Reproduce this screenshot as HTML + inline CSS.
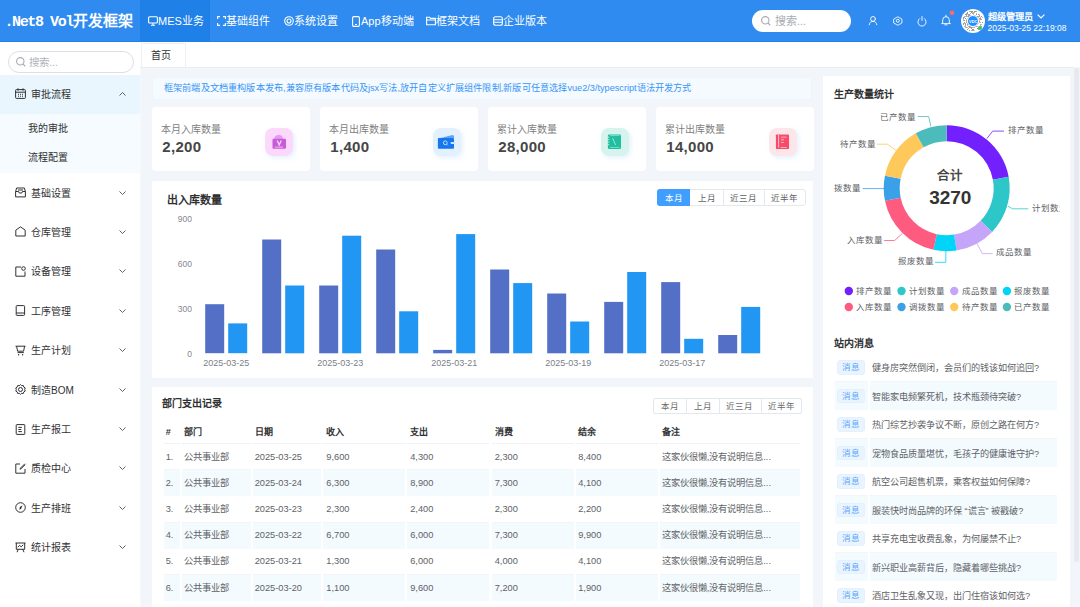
<!DOCTYPE html>
<html lang="zh-CN"><head><meta charset="utf-8">
<style>
*{box-sizing:border-box;margin:0;padding:0}
html,body{width:1080px;height:607px;overflow:hidden;background:#fff;font-family:"Liberation Sans",sans-serif;color:#303133;position:relative}
.a{position:absolute;white-space:nowrap}
svg{position:absolute;overflow:visible}
</style></head><body>
<div class="a" style="left:0.00px;top:0.00px;width:1080px;height:42px;background:#2f8bef"></div>
<div class="a" style="left:0.00px;top:41.00px;width:1080px;height:1px;background:#1b78e0;opacity:.6"></div>
<div class="a" style="left:4.50px;top:11.00px;font-size:15px;line-height:20px;font-weight:bold;color:#fff"><span style="font-family:'Liberation Mono',monospace;letter-spacing:-1.4px">.Net8 Vol</span>开发框架</div>
<div class="a" style="left:140.00px;top:0.00px;width:70px;height:42px;background:#1f80e8"></div>
<svg style="left:148px;top:16px" width="10" height="10" viewBox="0 0 10 10" fill="none" stroke="#fff" stroke-width="1.1"><rect x="0.6" y="0.8" width="8.8" height="6.2" rx="1"/><path d="M3 9.3h4M5 7v2.3"/></svg>
<div class="a" style="left:158.00px;top:14.00px;font-size:11px;line-height:14px;color:#fff">MES业务</div>
<svg style="left:217px;top:16px" width="9" height="10" viewBox="0 0 9 10" fill="none" stroke="#fff" stroke-width="1.1"><path d="M3 0.6H0.6v2.4M0.6 7v2.4H3M6 0.6h2.4v2.4M8.4 7v2.4H6"/></svg>
<div class="a" style="left:226.00px;top:14.00px;font-size:11px;line-height:14px;color:#fff">基础组件</div>
<svg style="left:284px;top:16px" width="10" height="10" viewBox="0 0 10 10" fill="none" stroke="#fff" stroke-width="1.1"><circle cx="5" cy="5" r="4.3"/><circle cx="5" cy="5" r="2"/></svg>
<div class="a" style="left:294.00px;top:14.00px;font-size:11px;line-height:14px;color:#fff">系统设置</div>
<svg style="left:352px;top:15.5px" width="8" height="11" viewBox="0 0 8 11" fill="none" stroke="#fff" stroke-width="1.1"><rect x="0.6" y="0.6" width="6.8" height="9.8" rx="1.2"/><path d="M3 8.5h2"/></svg>
<div class="a" style="left:361.00px;top:14.00px;font-size:11px;line-height:14px;color:#fff">App移动端</div>
<svg style="left:426px;top:16px" width="10" height="10" viewBox="0 0 10 10" fill="none" stroke="#fff" stroke-width="1.1"><path d="M0.6 1.2h3l1 1.2h4.8v6.4H0.6z M0.6 4h8.8"/></svg>
<div class="a" style="left:436.00px;top:14.00px;font-size:11px;line-height:14px;color:#fff">框架文档</div>
<svg style="left:493px;top:16px" width="10" height="10" viewBox="0 0 10 10" fill="none" stroke="#fff" stroke-width="1.1"><rect x="0.6" y="0.8" width="8.8" height="8.4" rx="2"/><path d="M0.6 3.7h8.8M0.6 6.3h8.8"/></svg>
<div class="a" style="left:503.00px;top:14.00px;font-size:11px;line-height:14px;color:#fff">企业版本</div>
<div class="a" style="left:752.00px;top:10.00px;width:99px;height:22px;border-radius:11px;background:#fff"></div>
<svg style="left:761px;top:16px" width="10" height="10" viewBox="0 0 10 10" fill="none" stroke="#a8abb2" stroke-width="1.1"><circle cx="4.3" cy="4.3" r="3.7"/><path d="M7 7l2.3 2.3"/></svg>
<div class="a" style="left:775.00px;top:13.00px;font-size:11px;line-height:16px;color:#a8abb2">搜索...</div>
<svg style="left:868px;top:15px" width="10" height="11" viewBox="0 0 10 11" fill="none" stroke="#fff" stroke-width="0.9" stroke-linecap="round"><circle cx="5" cy="3.9" r="2.4"/><path d="M1.2 9.7c0.3-2.2 1.8-3.3 3.8-3.3s3.5 1.1 3.8 3.3"/></svg>
<svg style="left:892.5px;top:16.3px" width="9.6" height="9.6" viewBox="0 0 11 10.5" fill="none" stroke="#fff" stroke-width="1.05"><path d="M5.5 0.8c1 0 1.6 .8 2.3 1.2s1.8 .3 2.3 1.2 0 1.7 0 2.3 .5 1.5 0 2.3-1.5 .8-2.3 1.2-1.3 1.2-2.3 1.2-1.6-.8-2.3-1.2-1.8-.3-2.3-1.2 0-1.7 0-2.3-.5-1.5 0-2.3 1.5-.8 2.3-1.2 1.3-1.2 2.3-1.2z"/><circle cx="5.5" cy="5.2" r="1.7"/></svg>
<svg style="left:916.5px;top:16px" width="10" height="11" viewBox="0 0 10 11" fill="none" stroke="#fff" stroke-width="0.9" stroke-linecap="round"><path d="M2.6 2.6A4.1 4.1 0 1 0 7.4 2.6"/><path d="M5 0.5v4"/></svg>
<svg style="left:940.5px;top:15px" width="10" height="11" viewBox="0 0 10 11" fill="none" stroke="#fff" stroke-width="0.9" stroke-linecap="round"><path d="M0.6 8.6h8.8M1.7 8.6V5a3.3 3.3 0 0 1 6.6 0v3.6M5 0.2v1.4M3.8 9.8h2.4"/></svg>
<svg style="left:949px;top:9.5px" width="6" height="6" viewBox="0 0 6 6"><circle cx="3" cy="2.8" r="2.4" fill="#f56c6c"/></svg>
<div class="a" style="left:961.00px;top:9.00px;width:24px;height:24px;border-radius:50%;background:#fff"></div>
<svg style="left:962px;top:10px" width="22" height="22" viewBox="0 0 22 22" opacity="0.75"><rect x="7" y="1" width="1" height="1" fill="#999"/><rect x="8" y="1" width="1" height="1" fill="#777"/><rect x="9" y="1" width="1" height="1" fill="#777"/><rect x="10" y="1" width="1" height="1" fill="#777"/><rect x="12" y="1" width="1" height="1" fill="#777"/><rect x="13" y="1" width="1" height="1" fill="#777"/><rect x="14" y="1" width="1" height="1" fill="#888"/><rect x="5" y="2" width="1" height="1" fill="#777"/><rect x="9" y="2" width="1" height="1" fill="#888"/><rect x="10" y="2" width="1" height="1" fill="#999"/><rect x="11" y="2" width="1" height="1" fill="#999"/><rect x="12" y="2" width="1" height="1" fill="#999"/><rect x="4" y="3" width="1" height="1" fill="#999"/><rect x="5" y="3" width="1" height="1" fill="#777"/><rect x="8" y="3" width="1" height="1" fill="#888"/><rect x="10" y="3" width="1" height="1" fill="#888"/><rect x="11" y="3" width="1" height="1" fill="#999"/><rect x="14" y="3" width="1" height="1" fill="#aaa"/><rect x="3" y="4" width="1" height="1" fill="#777"/><rect x="4" y="4" width="1" height="1" fill="#888"/><rect x="5" y="4" width="1" height="1" fill="#aaa"/><rect x="6" y="4" width="1" height="1" fill="#888"/><rect x="7" y="4" width="1" height="1" fill="#777"/><rect x="11" y="4" width="1" height="1" fill="#aaa"/><rect x="14" y="4" width="1" height="1" fill="#777"/><rect x="16" y="4" width="1" height="1" fill="#777"/><rect x="17" y="4" width="1" height="1" fill="#aaa"/><rect x="4" y="5" width="1" height="1" fill="#888"/><rect x="6" y="5" width="1" height="1" fill="#888"/><rect x="7" y="5" width="1" height="1" fill="#777"/><rect x="8" y="5" width="1" height="1" fill="#999"/><rect x="10" y="5" width="1" height="1" fill="#999"/><rect x="11" y="5" width="1" height="1" fill="#888"/><rect x="12" y="5" width="1" height="1" fill="#888"/><rect x="13" y="5" width="1" height="1" fill="#aaa"/><rect x="17" y="5" width="1" height="1" fill="#888"/><rect x="2" y="6" width="1" height="1" fill="#999"/><rect x="3" y="6" width="1" height="1" fill="#999"/><rect x="4" y="6" width="1" height="1" fill="#999"/><rect x="5" y="6" width="1" height="1" fill="#999"/><rect x="6" y="6" width="1" height="1" fill="#777"/><rect x="7" y="6" width="1" height="1" fill="#aaa"/><rect x="9" y="6" width="1" height="1" fill="#999"/><rect x="14" y="6" width="1" height="1" fill="#888"/><rect x="15" y="6" width="1" height="1" fill="#888"/><rect x="16" y="6" width="1" height="1" fill="#888"/><rect x="17" y="6" width="1" height="1" fill="#777"/><rect x="19" y="6" width="1" height="1" fill="#777"/><rect x="1" y="7" width="1" height="1" fill="#777"/><rect x="2" y="7" width="1" height="1" fill="#999"/><rect x="6" y="7" width="1" height="1" fill="#999"/><rect x="8" y="7" width="1" height="1" fill="#aaa"/><rect x="11" y="7" width="1" height="1" fill="#777"/><rect x="14" y="7" width="1" height="1" fill="#888"/><rect x="15" y="7" width="1" height="1" fill="#999"/><rect x="16" y="7" width="1" height="1" fill="#aaa"/><rect x="18" y="7" width="1" height="1" fill="#999"/><rect x="20" y="7" width="1" height="1" fill="#aaa"/><rect x="1" y="8" width="1" height="1" fill="#777"/><rect x="3" y="8" width="1" height="1" fill="#777"/><rect x="5" y="8" width="1" height="1" fill="#aaa"/><rect x="7" y="8" width="1" height="1" fill="#999"/><rect x="10" y="8" width="1" height="1" fill="#999"/><rect x="14" y="8" width="1" height="1" fill="#999"/><rect x="17" y="8" width="1" height="1" fill="#888"/><rect x="18" y="8" width="1" height="1" fill="#777"/><rect x="1" y="9" width="1" height="1" fill="#999"/><rect x="4" y="9" width="1" height="1" fill="#aaa"/><rect x="6" y="9" width="1" height="1" fill="#999"/><rect x="7" y="9" width="1" height="1" fill="#888"/><rect x="8" y="9" width="1" height="1" fill="#999"/><rect x="9" y="9" width="1" height="1" fill="#777"/><rect x="10" y="9" width="1" height="1" fill="#aaa"/><rect x="12" y="9" width="1" height="1" fill="#777"/><rect x="16" y="9" width="1" height="1" fill="#999"/><rect x="17" y="9" width="1" height="1" fill="#aaa"/><rect x="18" y="9" width="1" height="1" fill="#888"/><rect x="19" y="9" width="1" height="1" fill="#777"/><rect x="1" y="10" width="1" height="1" fill="#999"/><rect x="2" y="10" width="1" height="1" fill="#888"/><rect x="4" y="10" width="1" height="1" fill="#888"/><rect x="6" y="10" width="1" height="1" fill="#999"/><rect x="7" y="10" width="1" height="1" fill="#777"/><rect x="10" y="10" width="1" height="1" fill="#999"/><rect x="12" y="10" width="1" height="1" fill="#aaa"/><rect x="13" y="10" width="1" height="1" fill="#999"/><rect x="15" y="10" width="1" height="1" fill="#888"/><rect x="17" y="10" width="1" height="1" fill="#aaa"/><rect x="4" y="11" width="1" height="1" fill="#999"/><rect x="6" y="11" width="1" height="1" fill="#888"/><rect x="10" y="11" width="1" height="1" fill="#999"/><rect x="11" y="11" width="1" height="1" fill="#777"/><rect x="13" y="11" width="1" height="1" fill="#888"/><rect x="15" y="11" width="1" height="1" fill="#777"/><rect x="16" y="11" width="1" height="1" fill="#aaa"/><rect x="17" y="11" width="1" height="1" fill="#777"/><rect x="2" y="12" width="1" height="1" fill="#999"/><rect x="4" y="12" width="1" height="1" fill="#888"/><rect x="6" y="12" width="1" height="1" fill="#aaa"/><rect x="9" y="12" width="1" height="1" fill="#888"/><rect x="10" y="12" width="1" height="1" fill="#777"/><rect x="11" y="12" width="1" height="1" fill="#aaa"/><rect x="12" y="12" width="1" height="1" fill="#999"/><rect x="13" y="12" width="1" height="1" fill="#999"/><rect x="17" y="12" width="1" height="1" fill="#aaa"/><rect x="18" y="12" width="1" height="1" fill="#999"/><rect x="20" y="12" width="1" height="1" fill="#777"/><rect x="1" y="13" width="1" height="1" fill="#888"/><rect x="2" y="13" width="1" height="1" fill="#999"/><rect x="3" y="13" width="1" height="1" fill="#888"/><rect x="5" y="13" width="1" height="1" fill="#888"/><rect x="6" y="13" width="1" height="1" fill="#aaa"/><rect x="7" y="13" width="1" height="1" fill="#aaa"/><rect x="8" y="13" width="1" height="1" fill="#888"/><rect x="9" y="13" width="1" height="1" fill="#777"/><rect x="10" y="13" width="1" height="1" fill="#aaa"/><rect x="12" y="13" width="1" height="1" fill="#999"/><rect x="14" y="13" width="1" height="1" fill="#aaa"/><rect x="15" y="13" width="1" height="1" fill="#999"/><rect x="16" y="13" width="1" height="1" fill="#999"/><rect x="1" y="14" width="1" height="1" fill="#888"/><rect x="3" y="14" width="1" height="1" fill="#777"/><rect x="5" y="14" width="1" height="1" fill="#777"/><rect x="6" y="14" width="1" height="1" fill="#777"/><rect x="9" y="14" width="1" height="1" fill="#999"/><rect x="10" y="14" width="1" height="1" fill="#777"/><rect x="11" y="14" width="1" height="1" fill="#aaa"/><rect x="13" y="14" width="1" height="1" fill="#aaa"/><rect x="15" y="14" width="1" height="1" fill="#999"/><rect x="18" y="14" width="1" height="1" fill="#999"/><rect x="19" y="14" width="1" height="1" fill="#aaa"/><rect x="3" y="15" width="1" height="1" fill="#888"/><rect x="5" y="15" width="1" height="1" fill="#aaa"/><rect x="8" y="15" width="1" height="1" fill="#777"/><rect x="11" y="15" width="1" height="1" fill="#888"/><rect x="12" y="15" width="1" height="1" fill="#888"/><rect x="13" y="15" width="1" height="1" fill="#888"/><rect x="18" y="15" width="1" height="1" fill="#999"/><rect x="2" y="16" width="1" height="1" fill="#999"/><rect x="3" y="16" width="1" height="1" fill="#aaa"/><rect x="6" y="16" width="1" height="1" fill="#aaa"/><rect x="7" y="16" width="1" height="1" fill="#777"/><rect x="8" y="16" width="1" height="1" fill="#888"/><rect x="11" y="16" width="1" height="1" fill="#999"/><rect x="13" y="16" width="1" height="1" fill="#999"/><rect x="14" y="16" width="1" height="1" fill="#888"/><rect x="15" y="16" width="1" height="1" fill="#aaa"/><rect x="19" y="16" width="1" height="1" fill="#aaa"/><rect x="3" y="17" width="1" height="1" fill="#999"/><rect x="4" y="17" width="1" height="1" fill="#888"/><rect x="5" y="17" width="1" height="1" fill="#aaa"/><rect x="7" y="17" width="1" height="1" fill="#777"/><rect x="8" y="17" width="1" height="1" fill="#777"/><rect x="9" y="17" width="1" height="1" fill="#777"/><rect x="10" y="17" width="1" height="1" fill="#aaa"/><rect x="11" y="17" width="1" height="1" fill="#999"/><rect x="12" y="17" width="1" height="1" fill="#999"/><rect x="16" y="17" width="1" height="1" fill="#aaa"/><rect x="18" y="17" width="1" height="1" fill="#aaa"/><rect x="6" y="18" width="1" height="1" fill="#888"/><rect x="9" y="18" width="1" height="1" fill="#777"/><rect x="15" y="18" width="1" height="1" fill="#777"/><rect x="16" y="18" width="1" height="1" fill="#aaa"/><rect x="5" y="19" width="1" height="1" fill="#888"/><rect x="10" y="19" width="1" height="1" fill="#777"/><rect x="11" y="19" width="1" height="1" fill="#777"/><rect x="16" y="19" width="1" height="1" fill="#888"/><rect x="7" y="20" width="1" height="1" fill="#777"/><rect x="9" y="20" width="1" height="1" fill="#999"/><rect x="10" y="20" width="1" height="1" fill="#888"/><rect x="11" y="20" width="1" height="1" fill="#888"/><rect x="12" y="20" width="1" height="1" fill="#aaa"/></svg>
<div class="a" style="left:967.00px;top:15.00px;width:12px;height:12px;border-radius:50%;background:#1e90ff;border:1px solid #fff"></div>
<div class="a" style="left:969.00px;top:18.50px;font-size:4px;line-height:5px;font-weight:bold;color:#fff">VDC</div>
<div class="a" style="left:978.00px;top:25.50px;width:4px;height:4px;border-radius:50%;background:#3bc45a"></div>
<div class="a" style="left:987.50px;top:11.20px;font-size:9.2px;line-height:13px;font-weight:bold;color:#fff">超级管理员</div>
<svg style="left:1037px;top:13.5px" width="8" height="5" viewBox="0 0 8 5" fill="none" stroke="#fff" stroke-width="1.2"><path d="M0.6 0.6L4 4l3.4-3.4"/></svg>
<div class="a" style="left:987.50px;top:22.50px;font-size:8.5px;line-height:11px;color:#fff">2025-03-25 22:19:08</div>
<div class="a" style="left:7.50px;top:50.50px;width:126px;height:22px;border:1px solid #dcdfe6;border-radius:11px"></div>
<svg style="left:16px;top:57px" width="10" height="10" viewBox="0 0 10 10" fill="none" stroke="#a8abb2" stroke-width="1.1"><circle cx="4.3" cy="4.3" r="3.7"/><path d="M7 7l2.3 2.3"/></svg>
<div class="a" style="left:29.20px;top:54.50px;font-size:10.5px;line-height:15px;color:#b0b3b9">搜索...</div>
<div class="a" style="left:0.00px;top:75.00px;width:140px;height:39px;background:#eaf6fd"></div>
<div class="a" style="left:0.00px;top:114.00px;width:140px;height:59.3px;background:#f5fbfe"></div>
<svg style="left:15px;top:88.2px" width="11" height="11" viewBox="0 0 11 11" fill="none" stroke="#303133" stroke-width="1"><rect x="0.6" y="1.6" width="9.8" height="8.8" rx="0.8"/><path d="M0.6 4.2h9.8M3 0.3v2.4M8 0.3v2.4M3 6.3h1M5 6.3h1M7 6.3h1M3 8.2h1M5 8.2h1M7 8.2h1"/></svg>
<div class="a" style="left:31.00px;top:86.70px;font-size:10px;line-height:15px;color:#303133">审批流程</div>
<svg style="left:119px;top:91.7px" width="7" height="4" viewBox="0 0 7 4" fill="none" stroke="#606266" stroke-width="1"><path d="M0.5 3.5L3.5 0.5l3 3"/></svg>
<svg style="left:15px;top:187.0px" width="11" height="11" viewBox="0 0 11 11" fill="none" stroke="#303133" stroke-width="1"><path d="M1.6 1h7.8l1 3.5v5.4H0.6V4.5z M0.6 4.5h3l0.6 1.5h2.6l0.6-1.5h3 M3 3h5"/></svg>
<div class="a" style="left:31.00px;top:185.50px;font-size:10px;line-height:15px;color:#303133">基础设置</div>
<svg style="left:119px;top:190.5px" width="7" height="4" viewBox="0 0 7 4" fill="none" stroke="#606266" stroke-width="1"><path d="M0.5 0.5L3.5 3.5l3-3"/></svg>
<svg style="left:15px;top:226.4px" width="11" height="11" viewBox="0 0 11 11" fill="none" stroke="#303133" stroke-width="1"><path d="M0.8 10V4.2L5.5 0.8l4.7 3.4V10z"/></svg>
<div class="a" style="left:31.00px;top:224.91px;font-size:10px;line-height:15px;color:#303133">仓库管理</div>
<svg style="left:119px;top:229.9px" width="7" height="4" viewBox="0 0 7 4" fill="none" stroke="#606266" stroke-width="1"><path d="M0.5 0.5L3.5 3.5l3-3"/></svg>
<svg style="left:15px;top:265.8px" width="11" height="11" viewBox="0 0 11 11" fill="none" stroke="#303133" stroke-width="1"><path d="M6 1H0.8v9.2h9.2V5.5"/><circle cx="8.5" cy="2.5" r="1.8"/></svg>
<div class="a" style="left:31.00px;top:264.32px;font-size:10px;line-height:15px;color:#303133">设备管理</div>
<svg style="left:119px;top:269.3px" width="7" height="4" viewBox="0 0 7 4" fill="none" stroke="#606266" stroke-width="1"><path d="M0.5 0.5L3.5 3.5l3-3"/></svg>
<svg style="left:15px;top:305.2px" width="11" height="11" viewBox="0 0 11 11" fill="none" stroke="#303133" stroke-width="1"><rect x="1.2" y="0.6" width="8.4" height="9.8" rx="0.8"/><path d="M1.2 8h8.4"/></svg>
<div class="a" style="left:31.00px;top:303.73px;font-size:10px;line-height:15px;color:#303133">工序管理</div>
<svg style="left:119px;top:308.7px" width="7" height="4" viewBox="0 0 7 4" fill="none" stroke="#606266" stroke-width="1"><path d="M0.5 0.5L3.5 3.5l3-3"/></svg>
<svg style="left:15px;top:344.6px" width="11" height="11" viewBox="0 0 11 11" fill="none" stroke="#303133" stroke-width="1"><path d="M0.5 1.2h10M1.6 1.2l1 5h6l1-5M2.6 7.6h6.2"/><circle cx="3.6" cy="9.8" r=".7" fill="#303133" stroke="none"/><circle cx="7.6" cy="9.8" r=".7" fill="#303133" stroke="none"/></svg>
<div class="a" style="left:31.00px;top:343.14px;font-size:10px;line-height:15px;color:#303133">生产计划</div>
<svg style="left:119px;top:348.1px" width="7" height="4" viewBox="0 0 7 4" fill="none" stroke="#606266" stroke-width="1"><path d="M0.5 0.5L3.5 3.5l3-3"/></svg>
<svg style="left:15px;top:384.0px" width="11" height="11" viewBox="0 0 11 11" fill="none" stroke="#303133" stroke-width="1"><circle cx="5.5" cy="5.5" r="2"/><path d="M5.5 0.6l1.2 1.1 1.6-.2.5 1.6 1.4.8-.5 1.6.5 1.6-1.4.8-.5 1.6-1.6-.2-1.2 1.1-1.2-1.1-1.6.2-.5-1.6-1.4-.8.5-1.6-.5-1.6 1.4-.8.5-1.6 1.6.2z"/></svg>
<div class="a" style="left:31.00px;top:382.55px;font-size:10px;line-height:15px;color:#303133">制造BOM</div>
<svg style="left:119px;top:387.5px" width="7" height="4" viewBox="0 0 7 4" fill="none" stroke="#606266" stroke-width="1"><path d="M0.5 0.5L3.5 3.5l3-3"/></svg>
<svg style="left:15px;top:423.5px" width="11" height="11" viewBox="0 0 11 11" fill="none" stroke="#303133" stroke-width="1"><rect x="1.2" y="0.6" width="8.6" height="9.8" rx="0.6"/><path d="M3.3 3.4h3.6M3.3 5.5h3M3.3 7.6h3.6"/></svg>
<div class="a" style="left:31.00px;top:421.96px;font-size:10px;line-height:15px;color:#303133">生产报工</div>
<svg style="left:119px;top:427.0px" width="7" height="4" viewBox="0 0 7 4" fill="none" stroke="#606266" stroke-width="1"><path d="M0.5 0.5L3.5 3.5l3-3"/></svg>
<svg style="left:15px;top:462.9px" width="11" height="11" viewBox="0 0 11 11" fill="none" stroke="#303133" stroke-width="1"><path d="M5 1H0.8v9.2h9.2V6M9.8 0.8L5.5 5.1 5 6.2l1.1-0.5 4.2-4.2"/></svg>
<div class="a" style="left:31.00px;top:461.37px;font-size:10px;line-height:15px;color:#303133">质检中心</div>
<svg style="left:119px;top:466.4px" width="7" height="4" viewBox="0 0 7 4" fill="none" stroke="#606266" stroke-width="1"><path d="M0.5 0.5L3.5 3.5l3-3"/></svg>
<svg style="left:15px;top:502.3px" width="11" height="11" viewBox="0 0 11 11" fill="none" stroke="#303133" stroke-width="1"><circle cx="5.5" cy="5.5" r="4.8"/><path d="M7.6 3.2L6.2 6.4 4.4 8 4.8 5z" fill="#303133" stroke="none"/></svg>
<div class="a" style="left:31.00px;top:500.78px;font-size:10px;line-height:15px;color:#303133">生产排班</div>
<svg style="left:119px;top:505.8px" width="7" height="4" viewBox="0 0 7 4" fill="none" stroke="#606266" stroke-width="1"><path d="M0.5 0.5L3.5 3.5l3-3"/></svg>
<svg style="left:15px;top:541.7px" width="11" height="11" viewBox="0 0 11 11" fill="none" stroke="#303133" stroke-width="1"><path d="M0.5 1h10M1.3 1v6.3h8.4V1M3.3 7.3l-1.3 2.9M7.7 7.3l1.3 2.9M2.8 5.2l1.8-1.8 1.6 1.4 2-2"/></svg>
<div class="a" style="left:31.00px;top:540.19px;font-size:10px;line-height:15px;color:#303133">统计报表</div>
<svg style="left:119px;top:545.2px" width="7" height="4" viewBox="0 0 7 4" fill="none" stroke="#606266" stroke-width="1"><path d="M0.5 0.5L3.5 3.5l3-3"/></svg>
<div class="a" style="left:28.00px;top:120.50px;font-size:10px;line-height:15px;color:#303133">我的审批</div>
<div class="a" style="left:28.00px;top:150.30px;font-size:10px;line-height:15px;color:#303133">流程配置</div>
<div class="a" style="left:140.50px;top:43.00px;width:45.5px;height:25px;border:1px solid #eef0f3;border-bottom:none;background:#fff"></div>
<div class="a" style="left:151.00px;top:47.50px;font-size:10px;line-height:15px;color:#303133">首页</div>
<div class="a" style="left:140.00px;top:67.00px;width:940px;height:540px;background:#f2f5fa"></div>
<div class="a" style="left:140.00px;top:67.00px;width:1px;height:540px;background:#f7f9fc"></div>
<div class="a" style="left:140.00px;top:67.00px;width:934px;height:1px;background:#e9ecf1"></div>
<div class="a" style="left:1074.40px;top:67.50px;width:5px;height:494px;background:#e6e9ee;border-radius:2.5px"></div>
<div class="a" style="left:152.00px;top:76.50px;width:660px;height:23px;background:#f5faff;border:1px solid #edf5fe;border-radius:3px"></div>
<div class="a" style="left:163.50px;top:82.20px;font-size:9px;transform:scaleX(1.0175);transform-origin:0 0;line-height:13px;color:#3795f6">框架前端及文档重构版本发布,兼容原有版本代码及jsx写法,放开自定义扩展组件限制,新版可任意选择vue2/3/typescript语法开发方式</div>
<div class="a" style="left:152.00px;top:107.00px;width:157.5px;height:63.5px;background:#fff;border-radius:4px"></div>
<div class="a" style="left:161.30px;top:122.30px;font-size:10px;line-height:15px;color:#808080">本月入库数量</div>
<div class="a" style="left:162.30px;top:137.20px;font-size:15px;letter-spacing:0.3px;line-height:20px;font-weight:bold;color:#464646">2,200</div>
<div class="a" style="left:265.00px;top:128.00px;width:28px;height:28px;border-radius:8px;background:#fcd8fc;box-shadow:2px 2px 5px rgba(180,215,250,.35)"><svg style="left:0;top:0" width="28" height="28" viewBox="0 0 28 28"><path d="M9 10.9C9.5 8.5 11 7 13.3 7h1.5c1.8 0 2.8 1.5 3.2 3.9z" fill="#e49af4"/><rect x="7.5" y="10.8" width="13.5" height="9.9" rx="1" fill="#c95bd9"/><path d="M12.2 12.6l2 4.4 2-4.4" fill="none" stroke="#f6dcfb" stroke-width="1.3"/><path d="M9.8 19.1h8.2" stroke="#f0c6f8" stroke-width="0.9"/></svg></div>
<div class="a" style="left:320.00px;top:107.00px;width:157.5px;height:63.5px;background:#fff;border-radius:4px"></div>
<div class="a" style="left:329.30px;top:122.30px;font-size:10px;line-height:15px;color:#808080">本月出库数量</div>
<div class="a" style="left:330.30px;top:137.20px;font-size:15px;letter-spacing:0.3px;line-height:20px;font-weight:bold;color:#464646">1,400</div>
<div class="a" style="left:433.00px;top:128.00px;width:28px;height:28px;border-radius:8px;background:#e3f0fe;box-shadow:2px 2px 5px rgba(180,215,250,.35)"><svg style="left:0;top:0" width="28" height="28" viewBox="0 0 28 28"><path d="M6.5 10.3L19.5 6.9c1 0 1.5 .8 1.5 1.8v1.6z" fill="#5fa4f6"/><rect x="4.9" y="10.1" width="16.1" height="10.6" rx="1" fill="#1677ee"/><circle cx="12.3" cy="14.8" r="1.9" fill="none" stroke="#cfe3ff" stroke-width="0.9"/><path d="M13.6 16.2l1.2 1.2" stroke="#cfe3ff" stroke-width="0.9"/><rect x="17.5" y="13.9" width="4.5" height="2" rx=".8" fill="#cfe3ff"/></svg></div>
<div class="a" style="left:488.00px;top:107.00px;width:157.5px;height:63.5px;background:#fff;border-radius:4px"></div>
<div class="a" style="left:497.30px;top:122.30px;font-size:10px;line-height:15px;color:#808080">累计入库数量</div>
<div class="a" style="left:498.30px;top:137.20px;font-size:15px;letter-spacing:0.3px;line-height:20px;font-weight:bold;color:#464646">28,000</div>
<div class="a" style="left:601.00px;top:128.00px;width:28px;height:28px;border-radius:8px;background:#d6f3ee;box-shadow:2px 2px 5px rgba(180,215,250,.35)"><svg style="left:0;top:0" width="28" height="28" viewBox="0 0 28 28"><rect x="6.9" y="6.5" width="13.1" height="14.5" rx="1.3" fill="#1fbf9f"/><path d="M9 7.6h9.5M9 19.4h9.5" stroke="#a8e8d8" stroke-width="0.7"/><path d="M6.8 9.2h1.6M6.8 11.7h1.6M6.8 14.2h1.6M6.8 16.7h1.6" stroke="#d0f3ea" stroke-width="0.9"/><path d="M11.6 10.2l3 6.8" stroke="#b8efe0" stroke-width="0.8"/></svg></div>
<div class="a" style="left:656.00px;top:107.00px;width:157.5px;height:63.5px;background:#fff;border-radius:4px"></div>
<div class="a" style="left:665.30px;top:122.30px;font-size:10px;line-height:15px;color:#808080">累计出库数量</div>
<div class="a" style="left:666.30px;top:137.20px;font-size:15px;letter-spacing:0.3px;line-height:20px;font-weight:bold;color:#464646">14,000</div>
<div class="a" style="left:769.00px;top:128.00px;width:28px;height:28px;border-radius:8px;background:#fde6ea;box-shadow:2px 2px 5px rgba(180,215,250,.35)"><svg style="left:0;top:0" width="28" height="28" viewBox="0 0 28 28"><rect x="6.9" y="6.5" width="13.1" height="14.5" rx="0.8" fill="#f64c6a"/><path d="M9.6 7v12.5" stroke="#ffc8d2" stroke-width="0.9"/><path d="M12 9.2h5.5M12 11.8h3M12 14.4h3M11.6 19.5h6" stroke="#ffb8c6" stroke-width="0.9"/></svg></div>
<div class="a" style="left:152.00px;top:180.50px;width:661px;height:197.5px;background:#fff"></div>
<div class="a" style="left:166.50px;top:191.50px;font-size:11px;line-height:16px;font-weight:bold;color:#303133">出入库数量</div>
<div class="a" style="left:657.00px;top:189.40px;width:148.5px;height:17px;border:1px solid #e6e8ec;border-radius:3px;background:#fff"></div>
<div class="a" style="left:657.00px;top:189.40px;width:33px;height:17px;border-radius:3px 0 0 3px;background:#409eff"></div>
<div class="a" style="left:723.00px;top:189.70px;width:1px;height:16.5px;background:#e6e8ec"></div>
<div class="a" style="left:764.00px;top:189.70px;width:1px;height:16.5px;background:#e6e8ec"></div>
<div class="a" style="left:657.00px;top:189.70px;width:33px;height:16.5px;text-align:center;font-size:8.5px;line-height:16.5px;color:#fff">本月</div>
<div class="a" style="left:690.00px;top:189.70px;width:33px;height:16.5px;text-align:center;font-size:8.5px;line-height:16.5px;color:#606266">上月</div>
<div class="a" style="left:723.00px;top:189.70px;width:41px;height:16.5px;text-align:center;font-size:8.5px;line-height:16.5px;color:#606266">近三月</div>
<div class="a" style="left:764.00px;top:189.70px;width:41px;height:16.5px;text-align:center;font-size:8.5px;line-height:16.5px;color:#606266">近半年</div>
<div class="a" style="left:120.00px;top:213.00px;width:72px;text-align:right;font-size:8.5px;line-height:12px;color:#858891">900</div>
<div class="a" style="left:120.00px;top:258.30px;width:72px;text-align:right;font-size:8.5px;line-height:12px;color:#858891">600</div>
<div class="a" style="left:120.00px;top:303.30px;width:72px;text-align:right;font-size:8.5px;line-height:12px;color:#858891">300</div>
<div class="a" style="left:120.00px;top:348.30px;width:72px;text-align:right;font-size:8.5px;line-height:12px;color:#858891">0</div>
<div class="a" style="left:186.20px;top:356.50px;width:80px;text-align:center;font-size:9px;line-height:12px;color:#7c7f88">2025-03-25</div>
<div class="a" style="left:300.20px;top:356.50px;width:80px;text-align:center;font-size:9px;line-height:12px;color:#7c7f88">2025-03-23</div>
<div class="a" style="left:414.20px;top:356.50px;width:80px;text-align:center;font-size:9px;line-height:12px;color:#7c7f88">2025-03-21</div>
<div class="a" style="left:528.20px;top:356.50px;width:80px;text-align:center;font-size:9px;line-height:12px;color:#7c7f88">2025-03-19</div>
<div class="a" style="left:642.20px;top:356.50px;width:80px;text-align:center;font-size:9px;line-height:12px;color:#7c7f88">2025-03-17</div>
<div class="a" style="left:152.00px;top:386.80px;width:661px;height:230px;background:#fff"></div>
<div class="a" style="left:162.00px;top:396.20px;font-size:10px;line-height:15px;font-weight:bold;color:#303133">部门支出记录</div>
<div class="a" style="left:653.00px;top:398.00px;width:149px;height:16px;border:1px solid #e4e7ed;border-radius:2px"></div>
<div class="a" style="left:686.40px;top:398.00px;width:1px;height:16px;background:#e4e7ed"></div>
<div class="a" style="left:719.30px;top:398.00px;width:1px;height:16px;background:#e4e7ed"></div>
<div class="a" style="left:760.50px;top:398.00px;width:1px;height:16px;background:#e4e7ed"></div>
<div class="a" style="left:653.00px;top:398.30px;width:33.4px;text-align:center;font-size:8.5px;line-height:16px;color:#6a6a6a">本月</div>
<div class="a" style="left:686.40px;top:398.30px;width:32.9px;text-align:center;font-size:8.5px;line-height:16px;color:#6a6a6a">上月</div>
<div class="a" style="left:719.30px;top:398.30px;width:41.2px;text-align:center;font-size:8.5px;line-height:16px;color:#6a6a6a">近三月</div>
<div class="a" style="left:760.50px;top:398.30px;width:41.5px;text-align:center;font-size:8.5px;line-height:16px;color:#6a6a6a">近半年</div>
<div class="a" style="left:165.70px;top:425.00px;font-size:9px;line-height:14px;font-weight:bold;color:#303133">#</div>
<div class="a" style="left:164.00px;top:443.00px;width:16.0px;height:1px;background:#f0f2f5"></div>
<div class="a" style="left:183.70px;top:425.00px;font-size:9px;line-height:14px;font-weight:bold;color:#303133">部门</div>
<div class="a" style="left:182.00px;top:443.00px;width:69.0px;height:1px;background:#f0f2f5"></div>
<div class="a" style="left:254.70px;top:425.00px;font-size:9px;line-height:14px;font-weight:bold;color:#303133">日期</div>
<div class="a" style="left:253.00px;top:443.00px;width:68.3px;height:1px;background:#f0f2f5"></div>
<div class="a" style="left:326.30px;top:425.00px;font-size:9px;line-height:14px;font-weight:bold;color:#303133">收入</div>
<div class="a" style="left:323.30px;top:443.00px;width:82.1px;height:1px;background:#f0f2f5"></div>
<div class="a" style="left:410.20px;top:425.00px;font-size:9px;line-height:14px;font-weight:bold;color:#303133">支出</div>
<div class="a" style="left:407.40px;top:443.00px;width:82.1px;height:1px;background:#f0f2f5"></div>
<div class="a" style="left:494.70px;top:425.00px;font-size:9px;line-height:14px;font-weight:bold;color:#303133">消费</div>
<div class="a" style="left:491.50px;top:443.00px;width:82.1px;height:1px;background:#f0f2f5"></div>
<div class="a" style="left:578.20px;top:425.00px;font-size:9px;line-height:14px;font-weight:bold;color:#303133">结余</div>
<div class="a" style="left:575.60px;top:443.00px;width:82.1px;height:1px;background:#f0f2f5"></div>
<div class="a" style="left:661.70px;top:425.00px;font-size:9px;line-height:14px;font-weight:bold;color:#303133">备注</div>
<div class="a" style="left:659.70px;top:443.00px;width:140.3px;height:1px;background:#f0f2f5"></div>
<div class="a" style="left:164.00px;top:469.40px;width:16.0px;height:1px;background:#f3f5f8"></div>
<div class="a" style="left:182.00px;top:469.40px;width:69.0px;height:1px;background:#f3f5f8"></div>
<div class="a" style="left:253.00px;top:469.40px;width:68.3px;height:1px;background:#f3f5f8"></div>
<div class="a" style="left:323.30px;top:469.40px;width:82.1px;height:1px;background:#f3f5f8"></div>
<div class="a" style="left:407.40px;top:469.40px;width:82.1px;height:1px;background:#f3f5f8"></div>
<div class="a" style="left:491.50px;top:469.40px;width:82.1px;height:1px;background:#f3f5f8"></div>
<div class="a" style="left:575.60px;top:469.40px;width:82.1px;height:1px;background:#f3f5f8"></div>
<div class="a" style="left:659.70px;top:469.40px;width:140.3px;height:1px;background:#f3f5f8"></div>
<div class="a" style="left:165.70px;top:450.05px;font-size:9.25px;line-height:14px;color:#606266">1.</div>
<div class="a" style="left:183.70px;top:450.05px;font-size:9.25px;line-height:14px;color:#606266">公共事业部</div>
<div class="a" style="left:254.70px;top:450.05px;font-size:9.25px;line-height:14px;color:#606266">2025-03-25</div>
<div class="a" style="left:326.30px;top:450.05px;font-size:9.25px;line-height:14px;color:#606266">9,600</div>
<div class="a" style="left:410.20px;top:450.05px;font-size:9.25px;line-height:14px;color:#606266">4,300</div>
<div class="a" style="left:494.70px;top:450.05px;font-size:9.25px;line-height:14px;color:#606266">2,300</div>
<div class="a" style="left:578.20px;top:450.05px;font-size:9.25px;line-height:14px;color:#606266">8,400</div>
<div class="a" style="left:661.70px;top:450.05px;font-size:9.25px;line-height:14px;color:#606266">这家伙很懒,没有说明信息...</div>
<div class="a" style="left:164.00px;top:470.40px;width:16.0px;height:26.1px;background:#f4fbff"></div>
<div class="a" style="left:182.00px;top:470.40px;width:69.0px;height:26.1px;background:#f4fbff"></div>
<div class="a" style="left:253.00px;top:470.40px;width:68.3px;height:26.1px;background:#f4fbff"></div>
<div class="a" style="left:323.30px;top:470.40px;width:82.1px;height:26.1px;background:#f4fbff"></div>
<div class="a" style="left:407.40px;top:470.40px;width:82.1px;height:26.1px;background:#f4fbff"></div>
<div class="a" style="left:491.50px;top:470.40px;width:82.1px;height:26.1px;background:#f4fbff"></div>
<div class="a" style="left:575.60px;top:470.40px;width:82.1px;height:26.1px;background:#f4fbff"></div>
<div class="a" style="left:659.70px;top:470.40px;width:140.3px;height:26.1px;background:#f4fbff"></div>
<div class="a" style="left:165.70px;top:476.15px;font-size:9.25px;line-height:14px;color:#606266">2.</div>
<div class="a" style="left:183.70px;top:476.15px;font-size:9.25px;line-height:14px;color:#606266">公共事业部</div>
<div class="a" style="left:254.70px;top:476.15px;font-size:9.25px;line-height:14px;color:#606266">2025-03-24</div>
<div class="a" style="left:326.30px;top:476.15px;font-size:9.25px;line-height:14px;color:#606266">6,300</div>
<div class="a" style="left:410.20px;top:476.15px;font-size:9.25px;line-height:14px;color:#606266">8,900</div>
<div class="a" style="left:494.70px;top:476.15px;font-size:9.25px;line-height:14px;color:#606266">7,300</div>
<div class="a" style="left:578.20px;top:476.15px;font-size:9.25px;line-height:14px;color:#606266">4,100</div>
<div class="a" style="left:661.70px;top:476.15px;font-size:9.25px;line-height:14px;color:#606266">这家伙很懒,没有说明信息...</div>
<div class="a" style="left:164.00px;top:521.60px;width:16.0px;height:1px;background:#f3f5f8"></div>
<div class="a" style="left:182.00px;top:521.60px;width:69.0px;height:1px;background:#f3f5f8"></div>
<div class="a" style="left:253.00px;top:521.60px;width:68.3px;height:1px;background:#f3f5f8"></div>
<div class="a" style="left:323.30px;top:521.60px;width:82.1px;height:1px;background:#f3f5f8"></div>
<div class="a" style="left:407.40px;top:521.60px;width:82.1px;height:1px;background:#f3f5f8"></div>
<div class="a" style="left:491.50px;top:521.60px;width:82.1px;height:1px;background:#f3f5f8"></div>
<div class="a" style="left:575.60px;top:521.60px;width:82.1px;height:1px;background:#f3f5f8"></div>
<div class="a" style="left:659.70px;top:521.60px;width:140.3px;height:1px;background:#f3f5f8"></div>
<div class="a" style="left:165.70px;top:502.25px;font-size:9.25px;line-height:14px;color:#606266">3.</div>
<div class="a" style="left:183.70px;top:502.25px;font-size:9.25px;line-height:14px;color:#606266">公共事业部</div>
<div class="a" style="left:254.70px;top:502.25px;font-size:9.25px;line-height:14px;color:#606266">2025-03-23</div>
<div class="a" style="left:326.30px;top:502.25px;font-size:9.25px;line-height:14px;color:#606266">2,300</div>
<div class="a" style="left:410.20px;top:502.25px;font-size:9.25px;line-height:14px;color:#606266">2,400</div>
<div class="a" style="left:494.70px;top:502.25px;font-size:9.25px;line-height:14px;color:#606266">2,300</div>
<div class="a" style="left:578.20px;top:502.25px;font-size:9.25px;line-height:14px;color:#606266">2,200</div>
<div class="a" style="left:661.70px;top:502.25px;font-size:9.25px;line-height:14px;color:#606266">这家伙很懒,没有说明信息...</div>
<div class="a" style="left:164.00px;top:522.60px;width:16.0px;height:26.1px;background:#f4fbff"></div>
<div class="a" style="left:182.00px;top:522.60px;width:69.0px;height:26.1px;background:#f4fbff"></div>
<div class="a" style="left:253.00px;top:522.60px;width:68.3px;height:26.1px;background:#f4fbff"></div>
<div class="a" style="left:323.30px;top:522.60px;width:82.1px;height:26.1px;background:#f4fbff"></div>
<div class="a" style="left:407.40px;top:522.60px;width:82.1px;height:26.1px;background:#f4fbff"></div>
<div class="a" style="left:491.50px;top:522.60px;width:82.1px;height:26.1px;background:#f4fbff"></div>
<div class="a" style="left:575.60px;top:522.60px;width:82.1px;height:26.1px;background:#f4fbff"></div>
<div class="a" style="left:659.70px;top:522.60px;width:140.3px;height:26.1px;background:#f4fbff"></div>
<div class="a" style="left:165.70px;top:528.35px;font-size:9.25px;line-height:14px;color:#606266">4.</div>
<div class="a" style="left:183.70px;top:528.35px;font-size:9.25px;line-height:14px;color:#606266">公共事业部</div>
<div class="a" style="left:254.70px;top:528.35px;font-size:9.25px;line-height:14px;color:#606266">2025-03-22</div>
<div class="a" style="left:326.30px;top:528.35px;font-size:9.25px;line-height:14px;color:#606266">6,700</div>
<div class="a" style="left:410.20px;top:528.35px;font-size:9.25px;line-height:14px;color:#606266">6,000</div>
<div class="a" style="left:494.70px;top:528.35px;font-size:9.25px;line-height:14px;color:#606266">7,300</div>
<div class="a" style="left:578.20px;top:528.35px;font-size:9.25px;line-height:14px;color:#606266">9,900</div>
<div class="a" style="left:661.70px;top:528.35px;font-size:9.25px;line-height:14px;color:#606266">这家伙很懒,没有说明信息...</div>
<div class="a" style="left:164.00px;top:573.80px;width:16.0px;height:1px;background:#f3f5f8"></div>
<div class="a" style="left:182.00px;top:573.80px;width:69.0px;height:1px;background:#f3f5f8"></div>
<div class="a" style="left:253.00px;top:573.80px;width:68.3px;height:1px;background:#f3f5f8"></div>
<div class="a" style="left:323.30px;top:573.80px;width:82.1px;height:1px;background:#f3f5f8"></div>
<div class="a" style="left:407.40px;top:573.80px;width:82.1px;height:1px;background:#f3f5f8"></div>
<div class="a" style="left:491.50px;top:573.80px;width:82.1px;height:1px;background:#f3f5f8"></div>
<div class="a" style="left:575.60px;top:573.80px;width:82.1px;height:1px;background:#f3f5f8"></div>
<div class="a" style="left:659.70px;top:573.80px;width:140.3px;height:1px;background:#f3f5f8"></div>
<div class="a" style="left:165.70px;top:554.45px;font-size:9.25px;line-height:14px;color:#606266">5.</div>
<div class="a" style="left:183.70px;top:554.45px;font-size:9.25px;line-height:14px;color:#606266">公共事业部</div>
<div class="a" style="left:254.70px;top:554.45px;font-size:9.25px;line-height:14px;color:#606266">2025-03-21</div>
<div class="a" style="left:326.30px;top:554.45px;font-size:9.25px;line-height:14px;color:#606266">1,300</div>
<div class="a" style="left:410.20px;top:554.45px;font-size:9.25px;line-height:14px;color:#606266">6,000</div>
<div class="a" style="left:494.70px;top:554.45px;font-size:9.25px;line-height:14px;color:#606266">4,000</div>
<div class="a" style="left:578.20px;top:554.45px;font-size:9.25px;line-height:14px;color:#606266">4,100</div>
<div class="a" style="left:661.70px;top:554.45px;font-size:9.25px;line-height:14px;color:#606266">这家伙很懒,没有说明信息...</div>
<div class="a" style="left:164.00px;top:574.80px;width:16.0px;height:26.1px;background:#f4fbff"></div>
<div class="a" style="left:182.00px;top:574.80px;width:69.0px;height:26.1px;background:#f4fbff"></div>
<div class="a" style="left:253.00px;top:574.80px;width:68.3px;height:26.1px;background:#f4fbff"></div>
<div class="a" style="left:323.30px;top:574.80px;width:82.1px;height:26.1px;background:#f4fbff"></div>
<div class="a" style="left:407.40px;top:574.80px;width:82.1px;height:26.1px;background:#f4fbff"></div>
<div class="a" style="left:491.50px;top:574.80px;width:82.1px;height:26.1px;background:#f4fbff"></div>
<div class="a" style="left:575.60px;top:574.80px;width:82.1px;height:26.1px;background:#f4fbff"></div>
<div class="a" style="left:659.70px;top:574.80px;width:140.3px;height:26.1px;background:#f4fbff"></div>
<div class="a" style="left:165.70px;top:580.55px;font-size:9.25px;line-height:14px;color:#606266">6.</div>
<div class="a" style="left:183.70px;top:580.55px;font-size:9.25px;line-height:14px;color:#606266">公共事业部</div>
<div class="a" style="left:254.70px;top:580.55px;font-size:9.25px;line-height:14px;color:#606266">2025-03-20</div>
<div class="a" style="left:326.30px;top:580.55px;font-size:9.25px;line-height:14px;color:#606266">1,100</div>
<div class="a" style="left:410.20px;top:580.55px;font-size:9.25px;line-height:14px;color:#606266">9,600</div>
<div class="a" style="left:494.70px;top:580.55px;font-size:9.25px;line-height:14px;color:#606266">7,200</div>
<div class="a" style="left:578.20px;top:580.55px;font-size:9.25px;line-height:14px;color:#606266">1,900</div>
<div class="a" style="left:661.70px;top:580.55px;font-size:9.25px;line-height:14px;color:#606266">这家伙很懒,没有说明信息...</div>
<div class="a" style="left:823.00px;top:76.00px;width:246.5px;height:540px;background:#fff"></div>
<div class="a" style="left:834.00px;top:86.50px;font-size:10px;line-height:15px;font-weight:bold;color:#303133">生产数量统计</div>
<div class="a" style="left:834.00px;top:336.10px;font-size:10px;line-height:15px;font-weight:bold;color:#303133">站内消息</div>
<div class="a" style="left:856.30px;top:285.00px;font-size:8.5px;line-height:12px;color:#606266">排产数量</div>
<div class="a" style="left:909.00px;top:285.00px;font-size:8.5px;line-height:12px;color:#606266">计划数量</div>
<div class="a" style="left:961.70px;top:285.00px;font-size:8.5px;line-height:12px;color:#606266">成品数量</div>
<div class="a" style="left:1014.40px;top:285.00px;font-size:8.5px;line-height:12px;color:#606266">报废数量</div>
<div class="a" style="left:856.30px;top:301.00px;font-size:8.5px;line-height:12px;color:#606266">入库数量</div>
<div class="a" style="left:909.00px;top:301.00px;font-size:8.5px;line-height:12px;color:#606266">调拨数量</div>
<div class="a" style="left:961.70px;top:301.00px;font-size:8.5px;line-height:12px;color:#606266">待产数量</div>
<div class="a" style="left:1014.40px;top:301.00px;font-size:8.5px;line-height:12px;color:#606266">已产数量</div>
<svg style="left:0;top:0" width="1080" height="607" viewBox="0 0 1080 607"><rect x="205.2" y="304.2" width="19" height="49.0" fill="#5470c6"/><rect x="228.2" y="323.4" width="19" height="29.8" fill="#2196f3"/><rect x="262.2" y="239.5" width="19" height="113.8" fill="#5470c6"/><rect x="285.2" y="285.5" width="19" height="67.8" fill="#2196f3"/><rect x="319.2" y="285.5" width="19" height="67.8" fill="#5470c6"/><rect x="342.2" y="235.7" width="19" height="117.6" fill="#2196f3"/><rect x="376.2" y="249.5" width="19" height="103.8" fill="#5470c6"/><rect x="399.2" y="311.3" width="19" height="42.0" fill="#2196f3"/><rect x="433.2" y="349.9" width="19" height="3.4" fill="#5470c6"/><rect x="456.2" y="234.1" width="19" height="119.2" fill="#2196f3"/><rect x="490.2" y="269.5" width="19" height="83.8" fill="#5470c6"/><rect x="513.2" y="283.1" width="19" height="70.2" fill="#2196f3"/><rect x="547.2" y="293.5" width="19" height="59.8" fill="#5470c6"/><rect x="570.2" y="321.5" width="19" height="31.8" fill="#2196f3"/><rect x="604.2" y="301.9" width="19" height="51.4" fill="#5470c6"/><rect x="627.2" y="272.0" width="19" height="81.3" fill="#2196f3"/><rect x="661.2" y="282.1" width="19" height="71.2" fill="#5470c6"/><rect x="684.2" y="338.8" width="19" height="14.5" fill="#2196f3"/><rect x="718.2" y="335.0" width="19" height="18.3" fill="#5470c6"/><rect x="741.2" y="306.9" width="19" height="46.4" fill="#2196f3"/><path d="M946.70 125.20A63 63 0 0 1 1008.65 176.72L992.91 179.63A47 47 0 0 0 946.70 141.20Z" fill="#7320ff"/><path d="M1008.65 176.72A63 63 0 0 1 992.09 231.88L980.57 220.79A47 47 0 0 0 992.91 179.63Z" fill="#2ec7c9"/><path d="M992.09 231.88A63 63 0 0 1 956.56 250.42L954.05 234.62A47 47 0 0 0 980.57 220.79Z" fill="#c5a5fa"/><path d="M956.56 250.42A63 63 0 0 1 933.39 249.78L936.77 234.14A47 47 0 0 0 954.05 234.62Z" fill="#00d4f7"/><path d="M933.39 249.78A63 63 0 0 1 884.99 200.87L900.66 197.65A47 47 0 0 0 936.77 234.14Z" fill="#ff5b80"/><path d="M884.99 200.87A63 63 0 0 1 884.96 175.64L900.64 178.83A47 47 0 0 0 900.66 197.65Z" fill="#3aa0e8"/><path d="M884.96 175.64A63 63 0 0 1 915.77 133.31L923.63 147.25A47 47 0 0 0 900.64 178.83Z" fill="#ffc85a"/><path d="M915.77 133.31A63 63 0 0 1 946.70 125.20L946.70 141.20A47 47 0 0 0 923.63 147.25Z" fill="#4cbbbb"/><path d="M986.9 138.5L992.7 131.1H1004" fill="none" stroke="#7320ff" stroke-width="0.8"/><path d="M1008 206.2L1012.5 208.8H1028.3" fill="none" stroke="#2ec7c9" stroke-width="0.8"/><path d="M976.9 243.1L982.2 253.6H992.7" fill="none" stroke="#c5a5fa" stroke-width="0.8"/><path d="M945.8 250.7V262.3H935.2" fill="none" stroke="#00d4f7" stroke-width="0.8"/><path d="M902.3 233.5L894.6 240.5H884.1" fill="none" stroke="#ff5b80" stroke-width="0.8"/><path d="M884.4 188.6H862.6" fill="none" stroke="#3aa0e8" stroke-width="0.8"/><path d="M895.9 150.3L887.4 144.2H877" fill="none" stroke="#ffc85a" stroke-width="0.8"/><path d="M930.9 126.4L928.6 116.5H917.7" fill="none" stroke="#4cbbbb" stroke-width="0.8"/><circle cx="848.8" cy="291" r="4.2" fill="#7320ff"/><circle cx="901.5" cy="291" r="4.2" fill="#2ec7c9"/><circle cx="954.2" cy="291" r="4.2" fill="#c5a5fa"/><circle cx="1006.9" cy="291" r="4.2" fill="#00d4f7"/><circle cx="848.8" cy="307" r="4.2" fill="#ff5b80"/><circle cx="901.5" cy="307" r="4.2" fill="#3aa0e8"/><circle cx="954.2" cy="307" r="4.2" fill="#ffc85a"/><circle cx="1006.9" cy="307" r="4.2" fill="#4cbbbb"/></svg>
<div class="a" style="left:834px;top:100px;width:225.5px;height:180px;overflow:hidden"><div class="a" style="left:173.7px;top:24.3px;font-size:8.5px;line-height:12px;color:#606266">排产数量</div><div class="a" style="left:197.7px;top:102.0px;font-size:8.5px;line-height:12px;color:#606266">计划数量</div><div class="a" style="left:162.1px;top:146.3px;font-size:8.5px;line-height:12px;color:#606266">成品数量</div><div class="a" style="left:63.9px;top:155.2px;font-size:8.5px;line-height:12px;color:#606266">报废数量</div><div class="a" style="left:13.1px;top:134.1px;font-size:8.5px;line-height:12px;color:#606266">入库数量</div><div class="a" style="left:-8.7px;top:82.2px;font-size:8.5px;line-height:12px;color:#606266">调拨数量</div><div class="a" style="left:5.9px;top:38.2px;font-size:8.5px;line-height:12px;color:#606266">待产数量</div><div class="a" style="left:46.3px;top:10.5px;font-size:8.5px;line-height:12px;color:#606266">已产数量</div></div>
<div class="a" style="left:910.30px;top:167.00px;width:80px;text-align:center;font-size:12.5px;line-height:18px;font-weight:bold;color:#464646">合计</div>
<div class="a" style="left:900.30px;top:186.00px;width:100px;text-align:center;font-size:19px;line-height:24px;font-weight:bold;color:#333">3270</div>
<div class="a" style="left:835.40px;top:380.90px;width:33px;height:1px;background:#f3f5f8"></div>
<div class="a" style="left:870.40px;top:380.90px;width:187px;height:1px;background:#f3f5f8"></div>
<div class="a" style="left:837.00px;top:360.10px;width:28px;height:14.8px;border:1px solid #e3f0ff;border-radius:3px;background:#e9f4ff;text-align:center;font-size:8.5px;line-height:12.8px;color:#5aa5fa">消息</div>
<div class="a" style="left:872.00px;top:361.20px;font-size:9.15px;line-height:14px;color:#606266">健身房突然倒闭，会员们的钱该如何追回?</div>
<div class="a" style="left:835.40px;top:381.90px;width:33px;height:28.5px;background:#f4fbff"></div>
<div class="a" style="left:870.40px;top:381.90px;width:187px;height:28.5px;background:#f4fbff"></div>
<div class="a" style="left:837.00px;top:388.60px;width:28px;height:14.8px;border:1px solid #e3f0ff;border-radius:3px;background:#e9f4ff;text-align:center;font-size:8.5px;line-height:12.8px;color:#5aa5fa">消息</div>
<div class="a" style="left:872.00px;top:389.70px;font-size:9.15px;line-height:14px;color:#606266">智能家电频繁死机，技术瓶颈待突破?</div>
<div class="a" style="left:835.40px;top:437.90px;width:33px;height:1px;background:#f3f5f8"></div>
<div class="a" style="left:870.40px;top:437.90px;width:187px;height:1px;background:#f3f5f8"></div>
<div class="a" style="left:837.00px;top:417.10px;width:28px;height:14.8px;border:1px solid #e3f0ff;border-radius:3px;background:#e9f4ff;text-align:center;font-size:8.5px;line-height:12.8px;color:#5aa5fa">消息</div>
<div class="a" style="left:872.00px;top:418.20px;font-size:9.15px;line-height:14px;color:#606266">热门综艺抄袭争议不断，原创之路在何方?</div>
<div class="a" style="left:835.40px;top:438.90px;width:33px;height:28.5px;background:#f4fbff"></div>
<div class="a" style="left:870.40px;top:438.90px;width:187px;height:28.5px;background:#f4fbff"></div>
<div class="a" style="left:837.00px;top:445.60px;width:28px;height:14.8px;border:1px solid #e3f0ff;border-radius:3px;background:#e9f4ff;text-align:center;font-size:8.5px;line-height:12.8px;color:#5aa5fa">消息</div>
<div class="a" style="left:872.00px;top:446.70px;font-size:9.15px;line-height:14px;color:#606266">宠物食品质量堪忧，毛孩子的健康谁守护?</div>
<div class="a" style="left:835.40px;top:494.90px;width:33px;height:1px;background:#f3f5f8"></div>
<div class="a" style="left:870.40px;top:494.90px;width:187px;height:1px;background:#f3f5f8"></div>
<div class="a" style="left:837.00px;top:474.10px;width:28px;height:14.8px;border:1px solid #e3f0ff;border-radius:3px;background:#e9f4ff;text-align:center;font-size:8.5px;line-height:12.8px;color:#5aa5fa">消息</div>
<div class="a" style="left:872.00px;top:475.20px;font-size:9.15px;line-height:14px;color:#606266">航空公司超售机票，乘客权益如何保障?</div>
<div class="a" style="left:835.40px;top:495.90px;width:33px;height:28.5px;background:#f4fbff"></div>
<div class="a" style="left:870.40px;top:495.90px;width:187px;height:28.5px;background:#f4fbff"></div>
<div class="a" style="left:837.00px;top:502.60px;width:28px;height:14.8px;border:1px solid #e3f0ff;border-radius:3px;background:#e9f4ff;text-align:center;font-size:8.5px;line-height:12.8px;color:#5aa5fa">消息</div>
<div class="a" style="left:872.00px;top:503.70px;font-size:9.15px;line-height:14px;color:#606266">服装快时尚品牌的环保 “谎言” 被戳破?</div>
<div class="a" style="left:835.40px;top:551.90px;width:33px;height:1px;background:#f3f5f8"></div>
<div class="a" style="left:870.40px;top:551.90px;width:187px;height:1px;background:#f3f5f8"></div>
<div class="a" style="left:837.00px;top:531.10px;width:28px;height:14.8px;border:1px solid #e3f0ff;border-radius:3px;background:#e9f4ff;text-align:center;font-size:8.5px;line-height:12.8px;color:#5aa5fa">消息</div>
<div class="a" style="left:872.00px;top:532.20px;font-size:9.15px;line-height:14px;color:#606266">共享充电宝收费乱象，为何屡禁不止?</div>
<div class="a" style="left:835.40px;top:552.90px;width:33px;height:28.5px;background:#f4fbff"></div>
<div class="a" style="left:870.40px;top:552.90px;width:187px;height:28.5px;background:#f4fbff"></div>
<div class="a" style="left:837.00px;top:559.60px;width:28px;height:14.8px;border:1px solid #e3f0ff;border-radius:3px;background:#e9f4ff;text-align:center;font-size:8.5px;line-height:12.8px;color:#5aa5fa">消息</div>
<div class="a" style="left:872.00px;top:560.70px;font-size:9.15px;line-height:14px;color:#606266">新兴职业高薪背后，隐藏着哪些挑战?</div>
<div class="a" style="left:835.40px;top:608.90px;width:33px;height:1px;background:#f3f5f8"></div>
<div class="a" style="left:870.40px;top:608.90px;width:187px;height:1px;background:#f3f5f8"></div>
<div class="a" style="left:837.00px;top:588.10px;width:28px;height:14.8px;border:1px solid #e3f0ff;border-radius:3px;background:#e9f4ff;text-align:center;font-size:8.5px;line-height:12.8px;color:#5aa5fa">消息</div>
<div class="a" style="left:872.00px;top:589.20px;font-size:9.15px;line-height:14px;color:#606266">酒店卫生乱象又现，出门住宿该如何选?</div>
</body></html>
